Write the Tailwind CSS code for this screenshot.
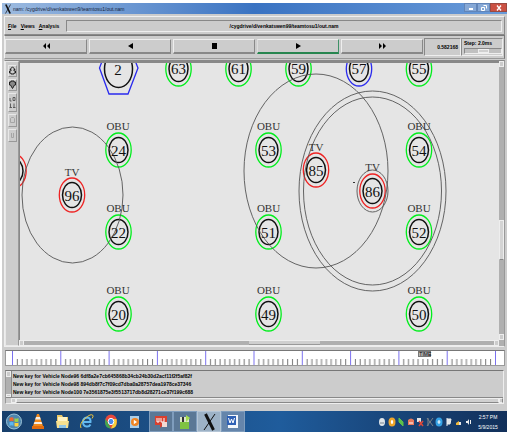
<!DOCTYPE html>
<html lang="en">
  <head>
    <meta charset="UTF-8" />
    <meta name="viewport" content="width=device-width, initial-scale=1.0" />
    <title>nam</title>
    <script src="https://cdn.jsdelivr.net/npm/@tailwindcss/browser@4"></script>
  </head>
  <body
    class="flex min-h-screen flex-col bg-white pt-[3px] pr-[14px] pl-[2px] font-['Liberation_Sans',sans-serif] text-[5px] leading-[8px] text-black"
  >
    <!-- title bar -->
    <header
      class="flex h-[11px] justify-between bg-linear-to-r from-[#9dbbe0] via-[#3a73c2] to-[#6a9bd9] pl-[3px]"
    >
      <h1 class="flex items-center gap-[2px] text-[#16243c]">
        <svg class="h-[10px] w-[6px]" viewBox="0 0 6 10" stroke="#111">
          <path d="M.8.5 5.200 9.500" stroke-width="1.700" />
          <path d="M5.500.5.5 9.500" stroke-width=".7" />
        </svg>
        nam: /cygdrive/d/venkatswen9/teamtosu1/out.nam
      </h1>
      <div class="flex h-[9px]">
        <button
          class="flex w-[13px] items-center justify-center border border-[#6285b8] bg-[#86a8d6]"
          aria-label="Minimize"
        >
          <svg class="h-[6px] w-[8px]" viewBox="0 0 8 6">
            <path d="M2 4h4" stroke="#fff" stroke-width="2" />
          </svg>
        </button>
        <button
          class="flex w-[13px] items-center justify-center border border-[#6285b8] bg-[#86a8d6]"
          aria-label="Restore"
        >
          <svg class="h-[6px] w-[8px]" viewBox="0 0 8 6" fill="none" stroke="#fff">
            <path d="M1.500 2.500h3v3h-3zM3.500.5h3v3" />
          </svg>
        </button>
        <button
          class="flex w-[17px] items-center justify-center border border-[#9a4a42] bg-[#cb5143]"
          aria-label="Close"
        >
          <svg class="h-[6px] w-[8px]" viewBox="0 0 8 6" stroke="#fff" stroke-width="1.300">
            <path d="M2 .5 6 5.500M6 .5 2 5.500" />
          </svg>
        </button>
      </div>
    </header>

    <main class="flex flex-1 flex-col bg-[#cccccc] pr-[2px] pl-[2px]">
      <!-- menu -->
      <nav
        class="mt-[2px] flex h-[19px] items-center border border-t-[#f0f0f0] border-r-[#8a8a8a] border-b-[#8a8a8a] border-l-[#f0f0f0] pr-[2px] pl-[3px] font-bold"
      >
        <div class="flex w-[58px] gap-[4px]">
          <button><u>F</u>ile</button>
          <button><u>V</u>iews</button>
          <button><u>A</u>nalysis</button>
        </div>
        <div
          class="flex h-[12px] flex-1 items-center justify-center border border-t-[#888] border-r-[#eee] border-b-[#eee] border-l-[#888]"
        >
          /cygdrive/d/venkatswen99/teamtosu1/out.nam
        </div>
      </nav>

      <!-- transport controls -->
      <div
        class="flex h-[24px] border border-t-[#777] border-r-[#777] border-b-[#999] border-l-[#f0f0f0] py-[2px] pr-[1px]"
      >
        <div class="grid flex-1 grid-cols-5 gap-[2px] py-[1px]">
          <button
            class="flex h-[15px] items-center justify-center border border-b-2 border-t-[#eee] border-r-[#888] border-b-[#888] border-l-[#eee]"
            aria-label="Rewind"
          >
            <svg class="h-[6px] w-[7px]" viewBox="0 0 7 6"><path d="M3 0v6L0 3zM7 0v6L4 3z" /></svg>
          </button>
          <button
            class="flex h-[15px] items-center justify-center border border-b-2 border-t-[#eee] border-r-[#888] border-b-[#888] border-l-[#eee]"
            aria-label="Play backward"
          >
            <svg class="h-[6px] w-[5px]" viewBox="0 0 5 6"><path d="M5 0v6L0 3z" /></svg>
          </button>
          <button
            class="flex h-[15px] items-center justify-center border border-b-2 border-t-[#eee] border-r-[#888] border-b-[#888] border-l-[#eee]"
            aria-label="Stop"
          >
            <svg class="h-[6px] w-[5px]" viewBox="0 0 5 6"><path d="M0 0h5v6H0z" /></svg>
          </button>
          <button
            class="flex h-[15px] items-center justify-center border border-b-2 border-t-[#eee] border-r-[#3f9167] border-b-[#27854f] border-l-[#ddd]"
            aria-label="Play"
          >
            <svg class="h-[6px] w-[5px]" viewBox="0 0 5 6"><path d="M0 0v6l5-3z" /></svg>
          </button>
          <button
            class="flex h-[15px] items-center justify-center border border-b-2 border-t-[#eee] border-r-[#888] border-b-[#888] border-l-[#eee]"
            aria-label="Fast forward"
          >
            <svg class="h-[6px] w-[7px]" viewBox="0 0 7 6"><path d="M0 0v6l3-3zM4 0v6l3-3z" /></svg>
          </button>
        </div>
        <output
          class="ml-[1px] flex w-[37px] items-center justify-end border border-t-[#888] border-r-[#eee] border-b-[#eee] border-l-[#888] pr-[2px] font-bold"
          >0.582168</output
        >
        <div
          class="flex w-[42px] flex-col justify-between border border-t-[#888] border-r-[#eee] border-b-[#eee] border-l-[#888] pb-[1px] pl-[2px]"
        >
          <label for="step" class="font-bold">Step: 2.0ms</label>
          <input
            id="step"
            type="range"
            value="52"
            class="h-[6px] w-full appearance-none border border-t-[#888] border-r-[#eee] border-b-[#eee] border-l-[#888] bg-[#c0c0c0] [&::-webkit-slider-thumb]:h-[4px] [&::-webkit-slider-thumb]:w-[11px] [&::-webkit-slider-thumb]:appearance-none [&::-webkit-slider-thumb]:border [&::-webkit-slider-thumb]:border-[#eee] [&::-webkit-slider-thumb]:bg-[#d0d0d0]"
          />
        </div>
      </div>

      <!-- zoom tools, animation view, scrollbars -->
      <div
        class="mt-[1px] flex border border-t-[#888] border-r-[#999] border-b-[#eee] border-l-[#eee]"
      >
        <div
          class="flex w-[14px] flex-col items-center gap-[2px] border border-[#e8e8e8] border-r-[#999] pt-[3px]"
        >
          <button class="h-[12px] w-[9px] border border-[#e8e8e8] border-r-[#999] border-b-[#999]" aria-label="Zoom in">
            <svg class="h-[10px] w-[7px]" viewBox="0 0 7 10" fill="none" stroke="#222">
              <path d="M3.500.8 6 3.500H5v1.500h1.500v2H5V8H2V7H.5V5H2V3.500H1z" />
            </svg>
          </button>
          <button class="h-[12px] w-[9px] border border-[#e8e8e8] border-r-[#999] border-b-[#999]" aria-label="Zoom out">
            <svg class="h-[10px] w-[7px]" viewBox="0 0 7 10" fill="#888" stroke="#222">
              <path d="M2 1h3v1h1.500v3H5.500L3.500 8.500 1.500 5H.5V2H2z" />
            </svg>
          </button>
          <button class="h-[19px] w-[9px] border border-[#e8e8e8] border-r-[#999] border-b-[#999]" aria-label="Edit">
            <svg class="h-[17px] w-[7px]" viewBox="0 0 7 17" fill="none" stroke="#444" stroke-width=".8">
              <path d="M1 4v3h1.500M4 3.500h2v3H4zM1.500 9.500v4M3 13.500H.5M5 9.500v4M6.500 13.500H4" />
            </svg>
          </button>
          <button class="h-[13px] w-[9px] border border-[#e8e8e8] border-r-[#999] border-b-[#999]" aria-label="Node" disabled>
            <svg class="h-[11px] w-[7px]" viewBox="0 0 7 11" fill="none" stroke="#a5a5a5">
              <path d="M1.500 3.500 2.500 2.500h2l1 1v4h-4z" />
            </svg>
          </button>
          <button class="h-[13px] w-[9px] border border-[#e8e8e8] border-r-[#999] border-b-[#999]" aria-label="Link" disabled>
            <svg class="h-[11px] w-[7px]" viewBox="0 0 7 11" fill="none" stroke="#a5a5a5">
              <path d="M2.500 3v4.500h2V3" />
            </svg>
          </button>
        </div>

        <div class="min-w-0 flex-1">
          <div class="border-t-2 border-l border-[#888]">
            <svg
              class="block h-[277px] w-full bg-[#e5e5e5] font-['Liberation_Serif',serif]"
              viewBox="20 63 479 277"
              preserveAspectRatio="xMinYMin slice"
              fill="none"
              text-anchor="middle"
            >
              <defs>
                <g id="node">
                  <ellipse rx="12.700" ry="17" stroke-width="1.300" />
                  <ellipse rx="9.500" ry="12.500" stroke="#111" stroke-width="1.500" />
                </g>
              </defs>

              <g stroke="#00ee1c">
                <use href="#node" x="178.500" y="69" />
                <use href="#node" x="238.500" y="69" />
                <use href="#node" x="298.500" y="69" />
                <use href="#node" x="419" y="69" />
                <use href="#node" x="118.500" y="150" />
                <use href="#node" x="118.500" y="232" />
                <use href="#node" x="118.500" y="314" />
                <use href="#node" x="268.500" y="150" />
                <use href="#node" x="268.500" y="232" />
                <use href="#node" x="268.500" y="314" />
                <use href="#node" x="419" y="150" />
                <use href="#node" x="419" y="232" />
                <use href="#node" x="419" y="314" />
              </g>
              <g stroke="#ee2222">
                <use href="#node" x="13.500" y="171" />
                <use href="#node" x="72" y="195" />
                <use href="#node" x="316" y="170" />
                <use href="#node" x="372.500" y="191" />
              </g>
              <g stroke="#2a2aee">
                <use href="#node" x="359" y="69" />
                <path d="M109 43h19l10 25-10 26h-19L99.500 68z" stroke-width="1.300" />
              </g>
              <ellipse cx="118.500" cy="69" rx="14" ry="18.500" stroke="#111" stroke-width="1.500" />

              <!-- radio ranges -->
              <g stroke="#555" stroke-width=".9">
                <ellipse cx="72.500" cy="195" rx="50.500" ry="68" />
                <ellipse cx="316" cy="171" rx="72" ry="97" />
                <ellipse cx="372.500" cy="191" rx="73.500" ry="100" />
                <ellipse cx="372.500" cy="191" rx="69" ry="94" />
                <ellipse cx="372.500" cy="191" rx="15.500" ry="21" />
              </g>
              <path d="M353 182.500h2" stroke="#333" />

              <g fill="#111" font-size="15">
                <text x="118" y="75">2</text>
                <text x="178.500" y="74">63</text>
                <text x="238.500" y="74">61</text>
                <text x="298.500" y="74">59</text>
                <text x="359" y="74">57</text>
                <text x="419" y="74">55</text>
                <text x="118.500" y="156">24</text>
                <text x="118.500" y="238">22</text>
                <text x="118.500" y="320">20</text>
                <text x="268.500" y="156">53</text>
                <text x="268.500" y="238">51</text>
                <text x="268.500" y="320">49</text>
                <text x="419" y="156">54</text>
                <text x="419" y="238">52</text>
                <text x="419" y="320">50</text>
                <text x="72" y="201">96</text>
                <text x="316" y="176">85</text>
                <text x="372.500" y="197">86</text>
              </g>
              <g fill="#333" font-size="11">
                <text x="118" y="130">OBU</text>
                <text x="118" y="212">OBU</text>
                <text x="118" y="294">OBU</text>
                <text x="268.500" y="130">OBU</text>
                <text x="268.500" y="212">OBU</text>
                <text x="268.500" y="294">OBU</text>
                <text x="419" y="130">OBU</text>
                <text x="419" y="212">OBU</text>
                <text x="419" y="294">OBU</text>
                <text x="72" y="176">TV</text>
                <text x="316" y="151">TV</text>
                <text x="372.500" y="171">TV</text>
              </g>
            </svg>
          </div>
          <div class="flex h-[6px] border border-[#eee] bg-[#b0b0b0]">
            <div class="w-[4px] border-r border-[#eee] bg-[#ccc]"></div>
            <div class="w-[47%]"></div>
            <div class="w-[15%] border-b border-[#999] bg-[#cfcfcf]"></div>
            <div class="ml-auto w-[4px] border-l border-[#eee] bg-[#ccc]"></div>
          </div>
        </div>

        <div class="flex w-[5px] flex-col bg-[#b0b0b0]">
          <div class="h-[6px] border border-[#eee] bg-[#ccc]"></div>
          <div class="h-[153px]"></div>
          <div class="h-[40px] border border-[#eee] border-b-[#888] bg-[#d4d4d4]"></div>
          <div class="mt-auto mb-[6px] h-[6px] border border-[#eee] bg-[#ccc]"></div>
        </div>
      </div>

      <!-- timeline -->
      <div class="relative mt-[3px] ml-[1px] h-[16px] border border-[#999] border-t-[#777] bg-white">
        <svg class="h-full w-full" viewBox="6 352 498 14" preserveAspectRatio="none">
          <defs>
            <pattern id="ticks" x="12" y="352" width="48.300" height="14" patternUnits="userSpaceOnUse">
              <path
                d="M5.300 8v6M10.100 8v6M14.900 8v6M19.700 8v6M24.600 8v6M29.400 8v6M34.200 8v6M39 8v6M43.900 8v6"
                stroke="#666"
                stroke-width=".9"
              />
              <path d="M.5 0v14" stroke="#7a70ee" />
            </pattern>
          </defs>
          <path d="M12 352h484v14H12z" fill="url(#ticks)" />
        </svg>
        <input
          type="range"
          value="85"
          aria-label="Time"
          class="absolute top-0 left-0 h-[6px] w-full appearance-none bg-transparent [&::-webkit-slider-thumb]:h-[6px] [&::-webkit-slider-thumb]:w-[13px] [&::-webkit-slider-thumb]:appearance-none [&::-webkit-slider-thumb]:border [&::-webkit-slider-thumb]:border-[#777] [&::-webkit-slider-thumb]:bg-[#b4b4b4]"
        />
        <span class="pointer-events-none absolute top-0 left-[83%] text-[5px] leading-[6px]">TIME</span>
      </div>

      <!-- log -->
      <section
        class="mt-[4px] mr-[1px] ml-[1px] border border-t-[#777] border-r-[#eee] border-b-[#eee] border-l-[#999]"
      >
        <div class="flex h-[26px]">
          <div class="flex w-[5px] flex-col justify-between bg-[#b0b0b0]">
            <div class="h-[6px] border border-[#eee] bg-[#ccc]"></div>
            <div class="h-[3px] border border-[#eee] bg-[#ccc]"></div>
          </div>
          <div class="border-l border-[#888] pt-[1px] pl-[1px] font-bold">
            <p>New key for Vehicle Node96 6df8a2e7cb645868b34cb24b30d2acf11f2f5af82f</p>
            <p>New key for Vehicle Node98 894db8f7c7f09cd7dba0a28757dea1978ce37346</p>
            <p>New key for Vehicle Node100 7e3561875e3f5513717db8d28271ce37f199c688</p>
          </div>
        </div>
        <div class="flex h-[6px] justify-between border-t border-[#888]">
          <div class="ml-[5px] w-[5px] border border-[#eee]"></div>
          <div class="flex-1 border border-[#eee] border-b-[#888] bg-[#d0d0d0]"></div>
          <div class="w-[4px] border border-[#eee] border-r-[#888]"></div>
        </div>
      </section>
    </main>

    <!-- taskbar -->
    <footer
      class="flex h-[21px] items-center bg-linear-to-r from-[#173f6b] via-[#1f5c9c] via-55% to-[#12305a] pr-[7px] text-white"
    >
      <button class="flex w-[24px] justify-center" aria-label="Start">
        <svg class="h-[17px] w-[16px]" viewBox="0 0 16 17">
          <circle cx="8" cy="8.500" r="7.500" fill="#4f86ae" stroke="#9cc4d8" />
          <path d="M3.500 5q2-1.500 4-.3v3.600q-2-1-4 0z" fill="#f0662f" />
          <path d="M8.500 5.200q2 1 4-.2v3.500q-2 1-4 0z" fill="#9bd04b" />
          <path d="M3.500 9.300q2-1.200 4 0v3.500q-2-1-4 0z" fill="#5cb8f2" />
          <path d="M8.500 9.500q2 1 4 0V13q-2 1-4 0z" fill="#ffd23e" />
        </svg>
      </button>
      <button class="flex w-[24px] justify-center" aria-label="VLC">
        <svg class="h-[16px] w-[12px]" viewBox="0 0 12 16">
          <path d="M5 0h2l4 12H1z" fill="#f28a1c" />
          <path d="M4 3h4l.8 2.500H3.200zM2.500 8h7l.8 2H1.700z" fill="#f4eee6" />
          <path d="M0 12h12v3H0z" fill="#e06c10" />
        </svg>
      </button>
      <button class="flex w-[24px] justify-center" aria-label="Explorer">
        <svg class="h-[15px] w-[13px]" viewBox="0 0 13 15">
          <path d="M1 1h5l1 2h5v11H1z" fill="#e9c766" />
          <path d="M2 3h9v4H2z" fill="#fff3c4" />
          <path d="M0 7h13l-1 7H1z" fill="#f6e08f" />
          <path d="M3 11h7v3H3z" fill="#8fc4e6" />
        </svg>
      </button>
      <button class="flex w-[25px] justify-center" aria-label="Internet Explorer">
        <svg class="h-[15px] w-[14px]" viewBox="0 0 14 15" fill="none">
          <path d="M10.500 10.500Q9 13 6.500 12.500 3 12 3 8t4-4.500q4 .5 3.500 4.500H4" stroke="#63b9f0" stroke-width="2" />
          <path d="M1 14Q-1 10 5 4.500T13 1.500q.5 1-1 3" stroke="#f0c63c" />
        </svg>
      </button>
      <button class="flex w-[24px] justify-center" aria-label="Chrome">
        <svg class="h-[15px] w-[12px]" viewBox="0 0 12 15">
          <ellipse cx="6" cy="7.500" rx="6" ry="7" fill="#e8483c" />
          <path d="M.5 4.500 6 14.500Q0 14.500 0 7.500z" fill="#3ea652" />
          <path d="M6 14.500 9 7.500 7 5h4.500Q13 14 6 14.500z" fill="#f7cf3a" />
          <ellipse cx="6" cy="7.500" rx="2.800" ry="3.200" fill="#4a8bea" stroke="#fff" />
        </svg>
      </button>
      <button class="flex w-[24px] justify-center" aria-label="Media Player">
        <svg class="h-[14px] w-[12px]" viewBox="0 0 12 14">
          <path d="M1 1h9v12H1z" fill="#a9cde8" />
          <circle cx="6" cy="7" r="4" fill="#ee8424" />
          <path d="M4.800 4.800v4.400L8 7z" fill="#fff" />
        </svg>
      </button>
      <button class="ml-[2px] flex h-full w-[24px] items-center justify-center border border-[#7f9dbd] bg-[#5b7896]" aria-label="Chat">
        <svg class="h-[14px] w-[13px]" viewBox="0 0 13 14">
          <path d="M0 1h12v9H8l-3 3v-3H0z" fill="#d9402f" />
          <path d="M2 3v4h2V3M6 3v4h3V3" stroke="#fff" fill="none" />
          <path d="M7 7h5v5H7z" fill="#f3d9d2" />
        </svg>
      </button>
      <button class="flex h-full w-[24px] items-center justify-center border border-[#7f9dbd] bg-[#5b7896]" aria-label="Editor">
        <svg class="h-[16px] w-[12px]" viewBox="0 0 12 16">
          <path d="M1 3h9v12H1z" fill="#dfe8c8" />
          <path d="M1 8h9v7H1z" fill="#7fc241" />
          <path d="M3 3h2v5H3z" fill="#333" />
          <path d="M7 1l4 3-4 4z" fill="#a5dd4e" />
        </svg>
      </button>
      <button class="flex h-full w-[24px] items-center justify-center border border-[#b4c5d6] bg-[#9db2c6]" aria-label="X server">
        <svg class="h-[18px] w-[13px]" viewBox="0 0 13 18" stroke="#111">
          <path d="M2.500 1 10.500 17" stroke-width="3" />
          <path d="M12 1 1 17" />
        </svg>
      </button>
      <button class="flex h-full w-[24px] items-center justify-center border border-[#7f9dbd] bg-[#6585ab]" aria-label="Word">
        <svg class="h-[15px] w-[12px]" viewBox="0 0 12 15">
          <path d="M1 1h10v13H1z" fill="#f4f7fb" />
          <path d="M0 2h9v9H0z" fill="#2f61b5" />
          <path d="M1.500 4 3 9l1.500-4L6 9l1.500-5" fill="none" stroke="#fff" />
        </svg>
      </button>

      <!-- tray -->
      <svg class="ml-auto h-[10px] w-[94px]" viewBox="0 0 94 10" fill="none">
        <ellipse cx="4" cy="5" rx="3" ry="4" fill="#dfe5ea" />
        <path d="M2 6h4" stroke="#78838e" />
        <ellipse cx="14" cy="5" rx="3.500" ry="4.500" fill="#f0a52a" />
        <ellipse cx="14" cy="5" rx="1.200" ry="2" fill="#fff" />
        <path d="M21 1v4l4 4V5z" fill="#5cc04a" stroke="#5cc04a" />
        <path d="M30 3q3-3 6 0v5h-6z" fill="#e9785c" />
        <path d="M31 6h4" stroke="#fff" />
        <path d="M39 1h4v4h-4z" fill="#e4e4e4" />
        <path d="M41 4l4 5M45 4l-4 5" stroke="#e04738" stroke-width="1.500" />
        <path d="M49 1l6 8M55 1l-6 8M50 1v8" stroke="#7c8489" />
        <ellipse cx="61" cy="5" rx="3.500" ry="4.500" fill="#35a2e6" />
        <path d="M61 3v4M59.500 5h3" stroke="#fff" />
        <path d="M69 1v8M69 2h4l-1 5h-3" stroke="#eee" fill="#dfe5ea" />
        <path d="M78 8V6l3-2v4z" fill="#f0b83a" />
        <path d="M81 5h2v3h-2z" fill="#e6e6e6" />
        <path d="M88 4h1.500L91 2v6L89.500 6H88z" fill="#eee" />
        <path d="M92.500 3v4" stroke="#eee" />
      </svg>
      <time class="ml-[4px] flex w-[24px] flex-col items-center leading-[10px] whitespace-nowrap">
        <span>2:57 PM</span>
        <span>5/9/2015</span>
      </time>
    </footer>
  </body>
</html>
